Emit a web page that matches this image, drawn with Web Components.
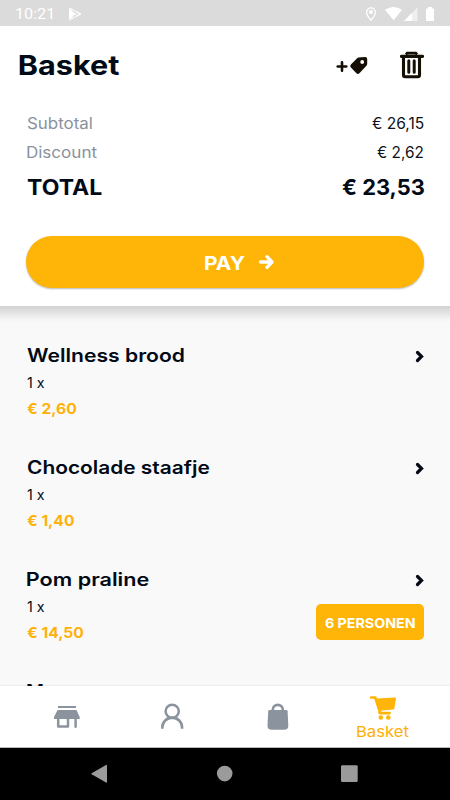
<!DOCTYPE html>
<html lang="nl">
<head>
<meta charset="utf-8">
<title>Basket</title>
<style>
body{margin:0;font-family:Montserrat,Inter,"Open Sans",sans-serif;color:#020a17;background:#fff}
</style>
</head>
<body>
<basket-app></basket-app>
<script>
const define=(name,html)=>{
  const t=document.createElement('template');t.innerHTML=html;
  customElements.define(name,class extends HTMLElement{
    connectedCallback(){
      if(this.shadowRoot)return;
      this.attachShadow({mode:'open'}).append(t.content.cloneNode(true));
    }
  });
};

// One line of text, stretched so that its ink fills the width in `w`.
const pen=document.createElement('canvas').getContext('2d');
customElements.define('fit-text',class extends HTMLElement{
  connectedCallback(){
    if(this.shadowRoot)return;
    const g=n=>this.getAttribute(n);
    const text=g('text'),w=+g('w'),size=g('size'),weight=g('weight')||400,font=g('font')||'Inter';
    pen.font=`${weight} ${size}px ${font}, sans-serif`;
    const m=pen.measureText(text);
    const s=w/(m.actualBoundingBoxRight+m.actualBoundingBoxLeft);
    const root=this.attachShadow({mode:'open'});
    root.innerHTML=`<style>
      :host{display:block;flex:none;width:${w}px;height:20px}
      span{display:block;width:max-content;white-space:pre;font:${weight} ${size}px/20px ${font},sans-serif;font-kerning:normal;
        transform-origin:0 0;transform:translateX(${(m.actualBoundingBoxLeft*s).toFixed(2)}px) scaleX(${s.toFixed(4)})}
    </style><span></span>`;
    root.querySelector('span').textContent=text;
  }
});

define('status-bar',`<style>
:host{display:flex;align-items:center;height:26px;box-sizing:border-box;padding:2px 16px 0 16px;background:#dbdbdb;color:#fff}
.gap{flex:1}svg{display:block;flex:none;margin-top:-1px}
</style>
<fit-text text="10:21" w="36.5" size="15.500" font="Roboto"></fit-text>
<svg style="margin-left:15px" width="15" height="14" viewBox="0 0 15 14"><path d="M1 .8 6.500 7 1 13.2z" fill="#fff"/><path d="M1.5 .9 12.500 7 1.5 13.1M3 3 9.500 9.300M3 11 9.500 4.700" stroke="#fff" stroke-width="1" fill="none"/><path d="M10.300 5l3 2-3 2z" fill="#fff"/></svg>
<span class="gap"></span>
<svg width="69" height="16" viewBox="365 5 69 16"><path d="M371 6.8a4.4 4.4 0 0 0-4.4 4.4c0 3 4.4 8 4.4 8s4.4-5 4.4-8A4.4 4.4 0 0 0 371 6.800z" fill="none" stroke="#fff" stroke-width="1.3"/><circle cx="371" cy="11" r="2" fill="#fff"/><path d="M385 8.700Q393.500 3.300 402 8.700L393.500 19.300z" fill="#fff"/><path d="M417.500 6.500V20H404z" fill="#efefef"/><path d="M412 12v8h-8z" fill="#fff"/><path d="M428 6h4v1.400h2V20h-8V7.400h2z" fill="#fff"/></svg>`);

define('basket-header',`<style>
:host{display:flex;align-items:center;height:78px;padding:0 26px 0 19px;color:#010b18}
.gap{flex:1}svg{display:block;flex:none}
fit-text{margin-top:1px}
</style>
<fit-text text="Basket" w="100.500" size="27" weight="700"></fit-text><span class="gap"></span>
<svg style="margin-top:2px" width="32" height="20" viewBox="336 56 32 20"><path d="M337.700 66.500h8.600M342 62.200v8.600" stroke="#140f02" stroke-width="2.600" stroke-linecap="round"/><path fill="#140f02" fill-rule="evenodd" d="M358.500 57.500 365 56.900Q367.200 56.800 367.200 59v4.800q0 1.200-.8 2l-7 7.400q-1.500 1.500-3 0l-5.500-5.600q-1.500-1.500 0-3l6-6.200q.7-.7 1.600-.8zM362.200 60.100a1.900 1.900 0 1 0 0 3.800a1.900 1.900 0 0 0 0-3.800z"/></svg>
<svg style="margin-left:32px" width="24" height="28" viewBox="400 51 24 28"><path d="M406 54.700 407.200 53.200h8.600L417 54.700" fill="none" stroke="#140f02" stroke-width="2.800"/><path d="M401.500 56.400h21" stroke="#140f02" stroke-width="3.200" stroke-linecap="round"/><path d="M403.500 57.500V75q0 1.700 1.700 1.700h12.600q1.700 0 1.700-1.700V57.500" fill="none" stroke="#140f02" stroke-width="3.100"/><path d="M408.800 60.800v11.400M414.200 60.800v11.400" stroke="#140f02" stroke-width="3" stroke-linecap="round"/></svg>`);

define('total-row',`<style>
:host{display:flex;justify-content:space-between;align-items:center;height:29px}
</style><slot name="label"></slot><slot name="value"></slot>`);

define('pay-button',`<style>
:host{display:flex;align-items:center;height:52px;margin:0 26px;box-sizing:border-box;padding:1px 0 0 179px;border-radius:26px;background:#ffb507;color:#fff;box-shadow:0 1px 2px rgba(0,0,0,.28)}
svg{display:block;margin:-1px 0 0 12.500px}
</style><fit-text text="PAY" w="40" size="19.200" weight="700"></fit-text>
<svg width="16" height="16" viewBox="0 0 16 16"><path d="M2.500 8h11M9 2.700 14 8l-5 5.300" fill="none" stroke="#fff" stroke-width="3.300" stroke-linecap="round" stroke-linejoin="round"/></svg>`);

define('basket-item',`<style>
:host{display:grid;grid-template-columns:1fr auto;height:112px;padding:0 26px 0 27px;box-sizing:border-box;align-content:start}
.info{display:flex;flex-direction:column}
.qty{margin-top:8px}.price{margin-top:5.500px;color:#ffb10b}
:host([peek]) .qty{display:none}
.side{display:flex;flex-direction:column;align-items:flex-end}
svg{display:block;margin-top:4.500px}
</style>
<div class="info"><slot name="title"></slot><fit-text class="qty" text="1 x" w="17.500" size="14.700"></fit-text><div class="price"><slot name="price"></slot></div></div>
<div class="side"><svg width="9" height="13" viewBox="0 0 9 13"><path d="M2.500 2.500 6.500 6.500l-4 4" fill="none" stroke="#020a17" stroke-width="3.200" stroke-linecap="round"/></svg><slot></slot></div>`);

define('option-badge',`<style>
:host{display:flex;align-items:center;width:108px;height:36px;box-sizing:border-box;padding:1px 0 0 8.500px;margin-top:17.500px;border-radius:5px;background:#ffb507;color:#fff}
</style><fit-text text="6 PERSONEN" w="90" size="13.800" weight="700"></fit-text>`);

define('tab-bar',`<style>
:host{display:grid;grid-template-columns:repeat(4,1fr);padding:0 14.500px;height:62px;box-sizing:border-box;background:#fff;border-bottom:1px solid #b9b9b9;box-shadow:0 0 2px rgba(0,0,0,.15);position:relative}
div{display:flex;flex-direction:column;align-items:center}
svg{display:block}.on{color:#ffaf05}
.on fit-text{margin-top:1px}
</style>
<div><svg style="margin-top:19px" width="28" height="26" viewBox="53 705 28 26"><path d="M58 706h18v1.900H58zM57.500 710h19L79.700 717v1.900H54V717z" fill="#8b949e"/><path d="M58.200 718v8.600h9.800V718M75.600 718v8.800" fill="none" stroke="#8b949e" stroke-width="2.500"  stroke-linecap="round" stroke-linejoin="round"/></svg></div>
<div><svg style="margin-top:16px" width="26" height="30" viewBox="159 702 26 30"><circle cx="172.200" cy="711.300" r="6.600" fill="none" stroke="#8b949e" stroke-width="2.500"/><path d="M162.300 728.800v-1.300a9.900 9.900 0 0 1 19.800 0v1.300" fill="none" stroke="#8b949e" stroke-width="2.600"/></svg></div>
<div><svg style="margin-top:16px" width="24" height="30" viewBox="266 702 24 30"><path d="M272.800 711.500v-1.700a5 5 0 0 1 10 0v1.700" fill="none" stroke="#8b949e" stroke-width="2.700"/><path d="M269.500 710h16.800q1.200 0 1.300 1.300l.7 14.200q.1 4.300-4.200 4.300h-12.400q-4.300 0-4.200-4.300l.7-14.200q.1-1.300 1.300-1.300z" fill="#8b949e"/></svg></div>
<div class="on"><svg style="margin-top:9px" width="28" height="26" viewBox="369 695 28 26"><path d="M371 697.500h4.200l4.400 13.700M380 711.200q-1.500 1.900.8 1.900h8.800" fill="none" stroke="#ffb507" stroke-width="2.600" stroke-linecap="round"/><path d="M375.800 698.500l19.200-1q1.100 0 1 1.100l-1.600 9.700q-.2 1.200-1.400 1.300l-13.500 1.200z" fill="#ffb507"/><circle cx="380.800" cy="717.500" r="2.300" fill="#ffb507"/><circle cx="388.300" cy="717.500" r="2.300" fill="#ffb507"/></svg>
<fit-text text="Basket" w="52" size="15"></fit-text></div>`);

define('system-nav',`<style>
:host{display:block;height:52px;background:#000}svg{display:block}
</style><svg width="450" height="52" viewBox="0 748 450 52" fill="#9b9b9b"><path d="M107 765.500v16.500q0 1-1 .5l-14.300-8.200q-.8-.5 0-1l14.300-8.300q1-.5 1 .5z"/><circle cx="224.700" cy="773.600" r="7.800"/><rect x="341" y="765.300" width="16.700" height="16.700" rx="1.200"/></svg>`);

define('basket-app',`<style>
:host{display:flex;flex-direction:column;width:450px;height:800px;overflow:hidden}
.top{height:280px;background:#fff}
.sums{padding:5px 26.500px 0 26.500px}
.muted{color:#89929d}.sum{color:#10131b}
total-row.t{height:40px}
pay-button{margin-top:29px}
main{flex:1;min-height:0;overflow:hidden;padding-top:39.400px;box-sizing:border-box;background:linear-gradient(#d2d2d2,#dcdcdc 4px,#e9e9e9 9px,#f4f4f4 13px,#f9f9f9 17px)}
</style>
<status-bar></status-bar>
<div class="top"><basket-header></basket-header>
<div class="sums">
<total-row><fit-text class="muted" slot="label" text="Subtotal" w="65" size="15.500"></fit-text><fit-text class="sum" slot="value" text="€ 26,15" w="52" size="15.300"></fit-text></total-row>
<total-row><fit-text class="muted" slot="label" text="Discount" w="70" size="15.500"></fit-text><fit-text class="sum" slot="value" text="€ 2,62" w="46.500" size="15.300"></fit-text></total-row>
<total-row class="t"><fit-text slot="label" text="TOTAL" w="75" size="21.500" weight="700"></fit-text><fit-text slot="value" text="€ 23,53" w="82" size="21.500" weight="700"></fit-text></total-row>
</div>
<pay-button></pay-button></div>
<main>
<basket-item><fit-text slot="title" text="Wellness brood" w="157.500" size="18.300" weight="600"></fit-text><fit-text slot="price" text="€ 2,60" w="50" size="14.700" weight="700"></fit-text></basket-item>
<basket-item><fit-text slot="title" text="Chocolade staafje" w="183" size="18.300" weight="600"></fit-text><fit-text slot="price" text="€ 1,40" w="47.500" size="14.700" weight="700"></fit-text></basket-item>
<basket-item><fit-text slot="title" text="Pom praline" w="122.500" size="18.300" weight="600"></fit-text><fit-text slot="price" text="€ 14,50" w="57" size="14.700" weight="700"></fit-text><option-badge></option-badge></basket-item>
<basket-item peek><fit-text slot="title" text="M" w="16" size="18.300" weight="600"></fit-text></basket-item>
</main>
<tab-bar></tab-bar>
<system-nav></system-nav>`);
</script>
</body>
</html>
